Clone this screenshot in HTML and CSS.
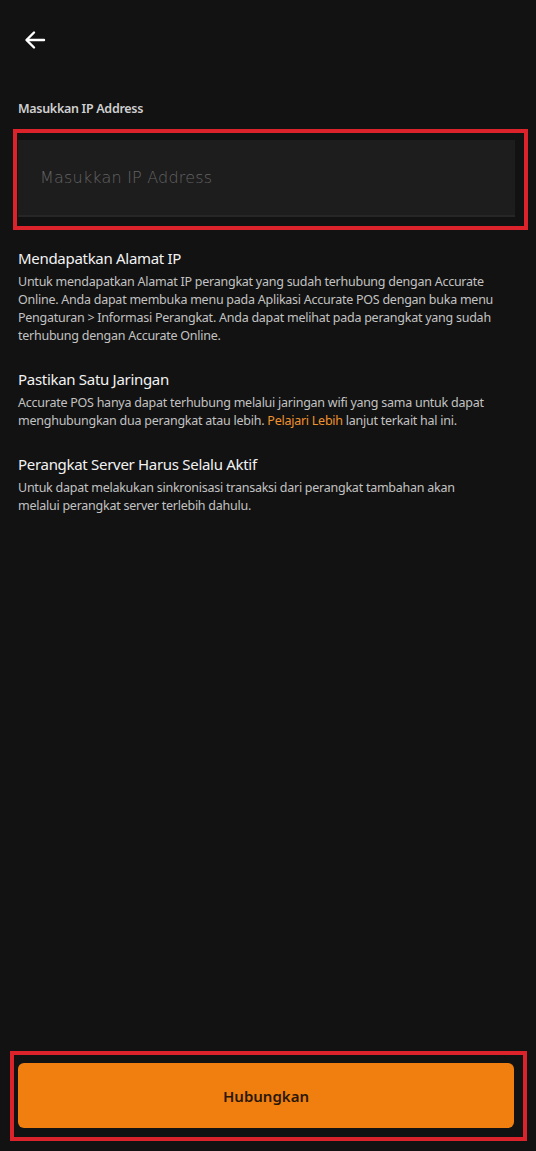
FILE: index.html
```html
<!DOCTYPE html>
<html lang="id">
<head>
<meta charset="utf-8">
<title>Hubungkan Perangkat</title>
<link rel="stylesheet" href="styles.css">
</head>
<body>
<div class="app">
  <header class="topbar">
    <button class="back" aria-label="Kembali">
      <svg width="24" height="24" viewBox="0 0 24 24" fill="none" stroke="#ffffff" stroke-width="2.4" stroke-linecap="round" stroke-linejoin="round">
        <path d="M21 12H4"/>
        <path d="M11 4.5L3.5 12L11 19.5"/>
      </svg>
    </button>
  </header>

  <label class="field-label" for="ip">Masukkan IP Address</label>
  <div class="field-frame">
    <input id="ip" class="field-input" type="text" placeholder="Masukkan IP Address">
  </div>

  <section class="info">
    <h2 class="info-title">Mendapatkan Alamat IP</h2>
    <p class="info-text">Untuk mendapatkan Alamat IP perangkat yang sudah terhubung dengan Accurate Online. Anda dapat membuka menu pada Aplikasi Accurate POS dengan buka menu Pengaturan &gt; Informasi Perangkat. Anda dapat melihat pada perangkat yang sudah terhubung dengan Accurate Online.</p>
  </section>

  <section class="info">
    <h2 class="info-title">Pastikan Satu Jaringan</h2>
    <p class="info-text">Accurate POS hanya dapat terhubung melalui jaringan wifi yang sama untuk dapat menghubungkan dua perangkat atau lebih. <a class="link" href="#">Pelajari Lebih</a> lanjut terkait hal ini.</p>
  </section>

  <section class="info">
    <h2 class="info-title">Perangkat Server Harus Selalu Aktif</h2>
    <p class="info-text">Untuk dapat melakukan sinkronisasi transaksi dari perangkat tambahan akan melalui perangkat server terlebih dahulu.</p>
  </section>

  <div class="action-frame">
    <button class="primary">Hubungkan</button>
  </div>
</div>
</body>
</html>
```

FILE: styles.css
```css
* { box-sizing: border-box; }

html, body {
  margin: 0;
  padding: 0;
  background: #121212;
}

body {
  font-family: "Noto Sans", "Open Sans", sans-serif;
  color: #ffffff;
}

.app {
  display: flex;
  flex-direction: column;
  min-height: 1151px;
  width: 536px;
}

.topbar {
  height: 80px;
  display: flex;
  align-items: center;
  padding-left: 22px;
}

.back {
  background: none;
  border: 0;
  padding: 0;
  width: 26px;
  height: 26px;
  display: flex;
  align-items: center;
  justify-content: center;
  cursor: pointer;
}

.field-label {
  display: block;
  margin: 20px 0 0 18px;
  font-size: 12.5px;
  font-weight: 600;
  line-height: 18px;
  letter-spacing: -0.3px;
  color: #cfcfcf;
}

.field-frame {
  margin: 11px 8px 0 13px;
  border: 4px solid #dc222b;
  padding: 7px 9px 9px 1px;
}

.field-input {
  display: block;
  width: 100%;
  height: 77px;
  border: 0;
  border-bottom: 2px solid #262626;
  background: #1d1d1d;
  padding: 0 22px;
  font-family: "DejaVu Sans", sans-serif;
  font-size: 16px;
  font-weight: 300;
  letter-spacing: 0.2px;
  color: #dddddd;
  outline: none;
}

.field-input::placeholder {
  color: #636363;
}

.info {
  padding: 0 38px 0 18px;
  margin-top: 18px;
}

.info + .info {
  margin-top: 24px;
}

.info-title {
  margin: 0;
  font-size: 15px;
  font-weight: 400;
  line-height: 20px;
  letter-spacing: -0.3px;
  color: #f2f2f2;
}

.info-text {
  margin: 5px 0 0;
  font-size: 12.5px;
  line-height: 18px;
  letter-spacing: -0.25px;
  color: #c2c2c2;
}

.link {
  color: #f0922e;
  text-decoration: none;
}

.action-frame {
  margin: auto 9px 10px 10px;
  border: 4px solid #dc222b;
  padding: 8px 9px 9px 4px;
}

.primary {
  display: block;
  width: 100%;
  height: 65px;
  border: 0;
  border-radius: 6px;
  background: #f07f10;
  font-family: "Noto Sans", "Open Sans", sans-serif;
  font-size: 15px;
  font-weight: 600;
  color: #2b1707;
  cursor: pointer;
}
```
